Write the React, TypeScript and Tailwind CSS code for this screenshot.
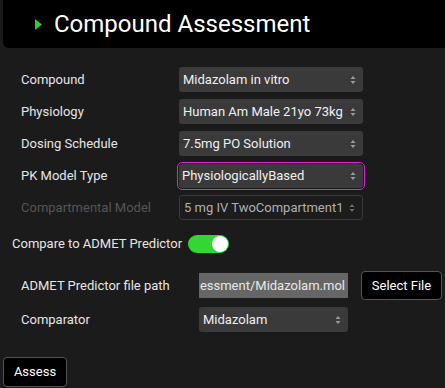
import React from "react";

const Arrows = ({ color = "#9a9a9a" }: { color?: string }) => (
  <svg width="6" height="10" viewBox="0 0 6 10" className="shrink-0">
    <path d="M0.5 4 L3 1 L5.5 4 Z" fill={color} />
    <path d="M0.5 6 L3 9 L5.5 6 Z" fill={color} />
  </svg>
);

const Select = ({
  value,
  className = "",
  disabled = false,
}: {
  value: string;
  className?: string;
  disabled?: boolean;
}) => (
  <div
    className={
      "flex items-center justify-between pl-[4px] pr-[7px] rounded-[3px] text-[13px] whitespace-nowrap overflow-hidden " +
      (disabled
        ? "bg-[#1c1c1c] border border-[#3a3a3a] text-[#b0b0b0] "
        : "bg-[#3a3a3a] text-[#f0f0f0] ") +
      className
    }
  >
    <span>{value}</span>
    <Arrows color={disabled ? "#6a6a6a" : "#9a9a9a"} />
  </div>
);

const Row = ({
  label,
  children,
  labelClass = "text-[#e6e6e6]",
}: {
  label: string;
  children: React.ReactNode;
  labelClass?: string;
}) => (
  <div className="flex items-center h-[25px]">
    <div className={"w-[158px] text-[13px] " + labelClass}>{label}</div>
    {children}
  </div>
);

export default function App() {
  return (
    <div
      className="w-[445px] h-[388px] bg-[#1b1b1b] overflow-hidden flex flex-col"
      style={{ fontFamily: "Roboto, 'Liberation Sans', sans-serif" }}
    >
      <div className="ml-[3px] h-[48px] bg-black rounded-bl-[6px] flex items-center">
        <svg width="7" height="11" viewBox="0 0 7 11" className="ml-[32px]">
          <path d="M0 0 L7 5.5 L0 11 Z" fill="#2ecc2e" />
        </svg>
        <span className="ml-[12px] text-[24px] text-white leading-none">
          Compound Assessment
        </span>
      </div>

      <div className="pl-[21px] mt-[19px] flex flex-col gap-[7px]">
        <Row label="Compound">
          <Select value="Midazolam in vitro" className="w-[184px] h-[25px]" />
        </Row>
        <Row label="Physiology">
          <Select value="Human Am Male 21yo 73kg" className="w-[184px] h-[25px]" />
        </Row>
        <Row label="Dosing Schedule">
          <Select value="7.5mg PO Solution" className="w-[184px] h-[25px]" />
        </Row>
        <Row label="PK Model Type">
          <div className="-ml-[2px] p-[1px] rounded-[5px] border border-[#e020e0]">
            <Select value="PhysiologicallyBased" className="w-[184px] h-[24px] !pl-[3px]" />
          </div>
        </Row>
        <Row label="Compartmental Model" labelClass="text-[#555555]">
          <Select value="5 mg IV TwoCompartment1" disabled className="w-[184px] h-[25px]" />
        </Row>
      </div>

      <div className="pl-[12px] mt-[15px] flex items-center h-[18px]">
        <span className="text-[13px] text-[#e6e6e6]">Compare to ADMET Predictor</span>
        <div className="ml-[6px] w-[41px] h-[18px] rounded-full bg-[#33d633] flex items-center justify-end pr-[1px]">
          <div className="w-[16px] h-[16px] rounded-full bg-white" />
        </div>
      </div>

      <div className="pl-[21px] mt-[18px] flex items-center h-[29px]">
        <div className="w-[178px] text-[13px] text-[#e6e6e6]">ADMET Predictor file path</div>
        <div className="w-[149px] h-[25px] bg-[#666666] text-[#e8e8e8] text-[13px] flex items-center justify-end pr-[3px] overflow-hidden whitespace-nowrap">
          <span>essment/Midazolam.mol</span>
        </div>
        <div className="ml-[13px] w-[81px] h-[29px] bg-black border border-[#555555] rounded-[4px] text-[13px] text-white flex items-center justify-center">
          Select File
        </div>
      </div>

      <div className="pl-[21px] mt-[7px] flex items-center h-[25px]">
        <div className="w-[178px] text-[13px] text-[#e6e6e6]">Comparator</div>
        <Select value="Midazolam" className="w-[149px] h-[25px]" />
      </div>

      <div className="ml-[3px] mt-[25px] w-[64px] h-[30px] bg-black border border-[#555555] rounded-[4px] text-[13px] text-white flex items-center justify-center">
        Assess
      </div>
    </div>
  );
}
